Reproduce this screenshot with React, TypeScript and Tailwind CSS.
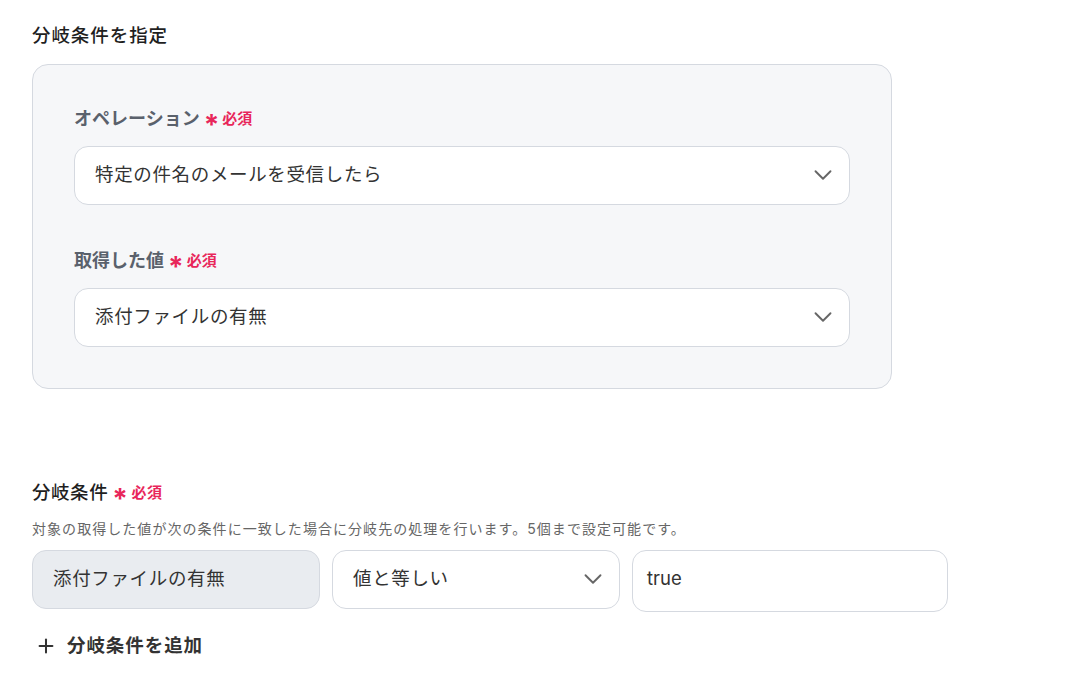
import { ChevronDown, Plus } from "lucide-react";

const font = { fontFamily: 'Inter, "Noto Sans CJK JP", sans-serif' };

function Required() {
  return (
    <span className="ml-[4px] flex items-center gap-[3px] text-[15px] font-bold text-[#e8265a]">
      <span className="text-[28px] leading-none translate-y-[6px]">*</span>
      必須
    </span>
  );
}

function Field({ label, value }: { label: string; value: string }) {
  return (
    <div className="flex flex-col gap-[13px]">
      <div className="flex items-center text-[18px] font-bold text-[#5a616c]">
        {label}
        <Required />
      </div>
      <div className="flex h-[59px] items-center justify-between rounded-[14px] border border-[#d5d9e0] bg-white pl-5 pr-[11px]">
        <span className="text-[18.5px] tracking-[0.035em] text-[#333]">{value}</span>
        <ChevronDown className="h-[30px] w-[30px] text-[#666]" strokeWidth={1.5} />
      </div>
    </div>
  );
}

export default function App() {
  return (
    <main className="min-h-screen bg-white px-8 pt-[22px]" style={font}>
      <h2 className="text-[18.5px] font-medium tracking-[0.05em] text-[#1f1f1f]">分岐条件を指定</h2>

      <section className="mt-[14px] flex w-[860px] flex-col gap-[42px] rounded-2xl border border-[#d5d9e0] bg-[#f6f7f9] px-[41px] pb-[41px] pt-[40px]">
        <Field label="オペレーション" value="特定の件名のメールを受信したら" />
        <Field label="取得した値" value="添付ファイルの有無" />
      </section>

      <section className="mt-[90px]">
        <div className="flex items-center text-[18.5px] font-medium tracking-[0.03em] text-[#1f1f1f]">
          分岐条件
          <Required />
        </div>
        <p className="mt-[11px] text-[14px] tracking-[0.075em] text-[#666]">
          対象の取得した値が次の条件に一致した場合に分岐先の処理を行います。5個まで設定可能です。
        </p>

        <div className="mt-[11px] flex items-start gap-3">
          <div className="flex h-[59px] w-[288px] items-center rounded-[14px] border border-[#d5d9e0] bg-[#e9ecf0] pl-5">
            <span className="text-[18.5px] tracking-[0.035em] text-[#333]">添付ファイルの有無</span>
          </div>
          <div className="flex h-[59px] w-[288px] items-center justify-between rounded-[14px] border border-[#d5d9e0] bg-white pl-5 pr-[11px]">
            <span className="text-[18.5px] tracking-[0.035em] text-[#333]">値と等しい</span>
            <ChevronDown className="h-[30px] w-[30px] text-[#666]" strokeWidth={1.5} />
          </div>
          <div className="flex h-[62px] w-[316px] items-center rounded-[14px] border border-[#d5d9e0] bg-white pl-[14px] pb-[4px]">
            <span className="text-[18.5px] text-[#333]">true</span>
          </div>
        </div>

        <button className="mt-[20px] flex items-center gap-[10px] pl-[3px] text-[18.5px] font-bold tracking-[0.05em] text-[#333]">
          <Plus className="h-[22px] w-[22px]" strokeWidth={2.2} />
          分岐条件を追加
        </button>
      </section>
    </main>
  );
}
